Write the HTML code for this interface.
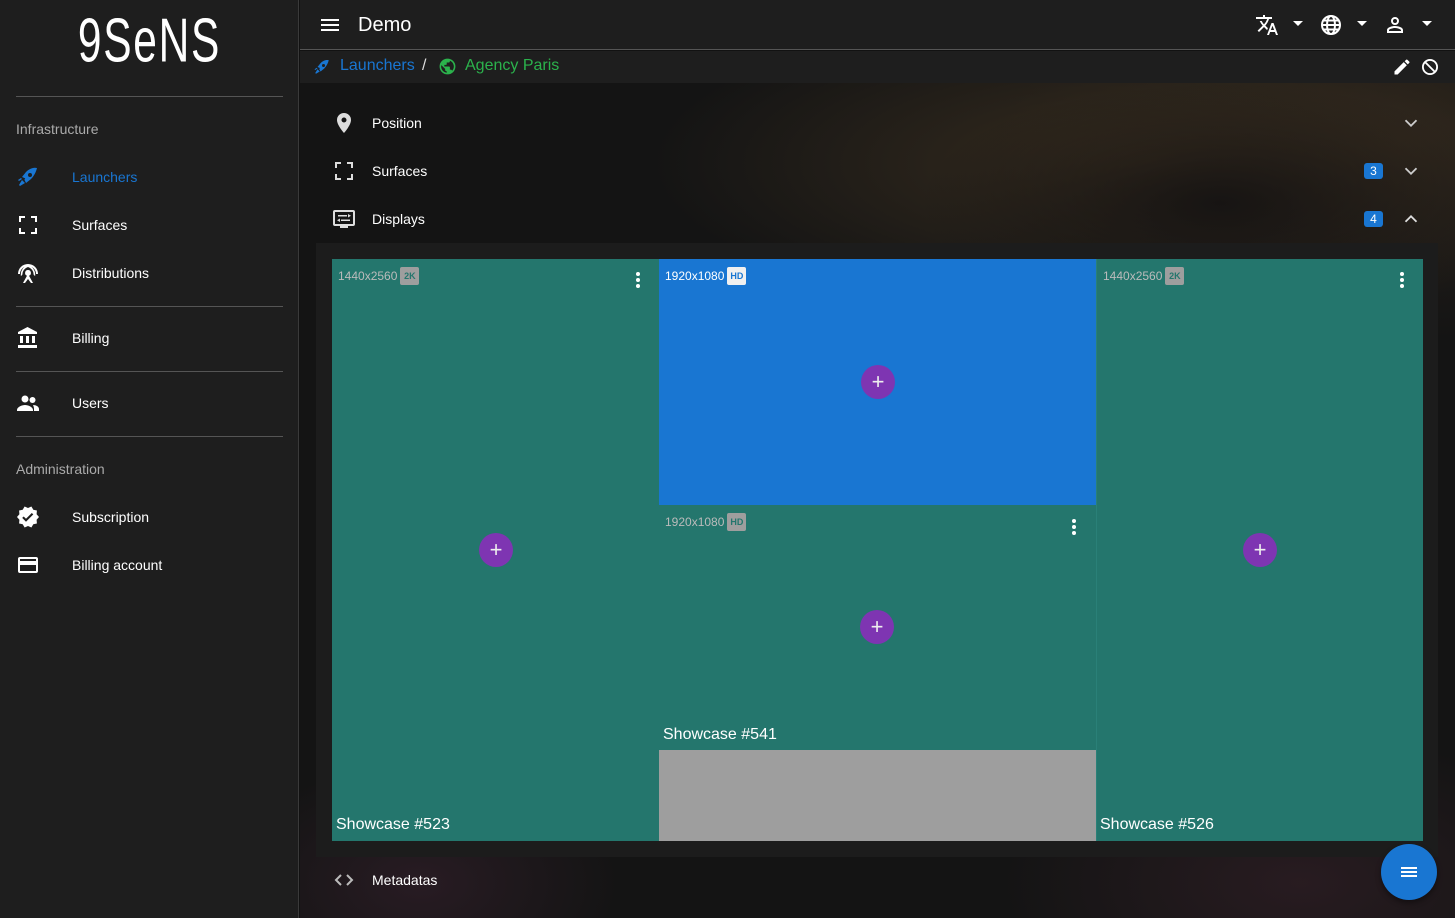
<!DOCTYPE html>
<html><head><meta charset="utf-8"><style>
*{box-sizing:border-box;margin:0;padding:0}
body{width:1455px;height:918px;overflow:hidden;background:#121212;font-family:"Liberation Sans",sans-serif;color:#fff;position:relative}
.side{position:absolute;left:0;top:0;width:299px;height:918px;background:#1e1e1e;border-right:1px solid #3a3a3a}
.logo{position:absolute;left:0;width:299px;top:4px;text-align:center;font-family:"Liberation Sans Narrow","Liberation Sans",sans-serif;font-size:50px;letter-spacing:2px;transform:scale(0.85,1.25);transform-origin:center top;color:#fff;font-weight:300}
.hr{position:absolute;left:16px;width:267px;height:1px;background:#555}
.sh{position:absolute;left:16px;font-size:14px;color:#aaa}
.it{position:absolute;left:16px;height:24px;display:flex;align-items:center;font-size:14px}
.it svg{width:24px;height:24px;margin-right:32px;fill:#fff}
.top{position:absolute;left:300px;top:0;right:0;height:50px;background:#1e1e1e;border-bottom:1px solid #555}
.bc{position:absolute;left:300px;top:51px;right:0;height:32px;background:#1e1e1e}
.main{position:absolute;left:300px;top:83px;right:0;bottom:0;background:
radial-gradient(ellipse 300px 120px at 920px 120px,rgba(20,18,18,.9),transparent),
radial-gradient(ellipse 500px 160px at 850px 80px,rgba(70,55,35,.7),transparent),
radial-gradient(ellipse 400px 200px at 1100px 60px,rgba(50,40,30,.6),transparent),
radial-gradient(ellipse 200px 120px at 120px 800px,rgba(60,35,50,.5),transparent),
radial-gradient(ellipse 300px 150px at 1000px 800px,rgba(60,35,45,.5),transparent),
#141414}
.row{position:absolute;left:332px;height:24px;display:flex;align-items:center;font-size:14px}
.row svg{width:24px;height:24px;fill:#ddd;margin-right:16px}
.chev{position:absolute;left:1400px;width:22px;height:22px}
.badge{position:absolute;left:1364px;width:19px;height:16px;background:#1976d2;border-radius:3px;font-size:12px;text-align:center;line-height:16px}
.panel{position:absolute;left:316px;top:243px;width:1122px;height:614px;background:#1c1c1c}
.d{position:absolute}
.res{position:absolute;left:6px;top:8px;font-size:12px;color:#bbb;display:flex;align-items:center}
.res b{display:inline-block;margin-left:3px;width:19px;height:18px;border-radius:2px;background:#9e9e9e;color:#24766d;font-size:9px;line-height:18px;text-align:center;font-weight:bold}
.plus{position:absolute;width:34px;height:34px;border-radius:50%;background:#7e35b2;color:#eee;font-size:22px;line-height:33px;text-align:center;font-weight:300}
.name{position:absolute;left:4px;bottom:7px;font-size:16px}
.dots{position:absolute;width:4px;top:13px}
.dots i{display:block;width:4px;height:4px;border-radius:50%;background:#fff;margin-bottom:2px}
</style></head><body>
<div class="side">
<div class="logo">9SeNS</div>
<div class="hr" style="top:96px"></div>
<div class="sh" style="top:121px">Infrastructure</div>
<div class="it" style="top:165px;color:#1976d2"><svg viewBox="0 0 24 24" style="fill:#1976d2"><path d="M9.2 13.4 6 12l4-5c3-3 7-5 11-4-1 4-3 8-6 11l-5 4-1.6-3.2zM14 8a2 2 0 1 0 2 2 2 2 0 0 0-2-2zM3 20l3-5 3 3-5 3zM2 15l3-2 1 1-3 2z"/></svg>Launchers</div>
<div class="it" style="top:213px"><svg viewBox="0 0 24 24"><path d="M3 3h6v2H5v4H3zM15 3h6v6h-2V5h-4zM3 15h2v4h4v2H3zM19 15h2v6h-6v-2h4z"/></svg>Surfaces</div>
<div class="it" style="top:261px"><svg viewBox="0 0 24 24"><path d="M12 9a3 3 0 0 0-1 5.8L7 22h2l3-4 3 4h2l-4-7.2A3 3 0 0 0 12 9zM6.3 13.7l-1.4 1.4A10 10 0 0 1 12 4a10 10 0 0 1 7.1 11.1l-1.4-1.4A8 8 0 0 0 12 6a8 8 0 0 0-5.7 7.7zM2 13a10 10 0 0 1 20 0h-2a8 8 0 0 0-16 0z"/></svg>Distributions</div>
<div class="hr" style="top:306px"></div>
<div class="it" style="top:326px"><svg viewBox="0 0 24 24"><path d="M4 10v7h3v-7zm6 0v7h3v-7zM2 22h19v-3H2zm14-12v7h3v-7zM11.5 1 2 6v2h19V6z"/></svg>Billing</div>
<div class="hr" style="top:371px"></div>
<div class="it" style="top:391px"><svg viewBox="0 0 24 24"><circle cx="9" cy="8" r="3.5"/><circle cx="16.5" cy="9" r="3"/><path d="M1 19c0-3 5-5 8-5s8 2 8 5v1H1zM17 14c3 0 6 1.5 6 4v2h-5v-2c0-1.5-.5-3-1-4z"/></svg>Users</div>
<div class="hr" style="top:436px"></div>
<div class="sh" style="top:461px">Administration</div>
<div class="it" style="top:505px"><svg viewBox="0 0 24 24"><path d="M23 12l-2.4-2.8.3-3.7-3.6-.8-1.9-3.2L12 3 8.6 1.5 6.7 4.7 3.1 5.5l.3 3.7L1 12l2.4 2.8-.3 3.7 3.6.8 1.9 3.2L12 21l3.4 1.5 1.9-3.2 3.6-.8-.3-3.7zm-13 4.7-3.8-3.8 1.5-1.4 2.3 2.3 5.8-5.8 1.5 1.4z"/></svg>Subscription</div>
<div class="it" style="top:553px"><svg viewBox="0 0 24 24"><path d="M20 4H4a2 2 0 0 0-2 2v12a2 2 0 0 0 2 2h16a2 2 0 0 0 2-2V6a2 2 0 0 0-2-2zm0 14H4v-6h16zm0-10H4V6h16z"/></svg>Billing account</div>
</div>
<div class="top">
<svg style="position:absolute;left:18px;top:13px" width="24" height="24" viewBox="0 0 24 24" fill="#fff"><path d="M3 6h18v2H3zm0 5h18v2H3zm0 5h18v2H3z"/></svg>
<div style="position:absolute;left:58px;top:14px;font-size:20px">Demo</div>
<svg style="position:absolute;left:955px;top:13px" width="24" height="24" viewBox="0 0 24 24" fill="#fff"><path d="M12.9 15.1 10.3 12.6v0A17 17 0 0 0 14 6h3V4h-7V2H8v2H1v2h11.2A15.6 15.6 0 0 1 9 11.4 15.6 15.6 0 0 1 6.7 8H4.7a17.6 17.6 0 0 0 3 4.6l-5.1 5 1.4 1.4L9 14l3.1 3.1zM18.5 10h-2L12 22h2l1.1-3h4.8l1.1 3h2zm-2.6 7 1.6-4.3 1.6 4.3z"/></svg>
<svg style="position:absolute;left:992px;top:20px" width="12" height="8"><path d="M1 1h10L6 6z" fill="#fff"/></svg>
<svg style="position:absolute;left:1019px;top:13px" width="24" height="24" viewBox="0 0 24 24" fill="none" stroke="#fff" stroke-width="2"><circle cx="12" cy="12" r="9"/><ellipse cx="12" cy="12" rx="4" ry="9"/><path d="M3 12h18M4.5 7.5h15M4.5 16.5h15"/></svg>
<svg style="position:absolute;left:1056px;top:20px" width="12" height="8"><path d="M1 1h10L6 6z" fill="#fff"/></svg>
<svg style="position:absolute;left:1083px;top:13px" width="24" height="24" viewBox="0 0 24 24" fill="#fff"><path d="M12 4a4 4 0 1 0 4 4 4 4 0 0 0-4-4zm0 6a2 2 0 1 1 2-2 2 2 0 0 1-2 2zm0 3c-2.7 0-8 1.3-8 4v3h16v-3c0-2.7-5.3-4-8-4zm6 5H6v-1c.2-.7 3.3-2 6-2s5.8 1.3 6 2z"/></svg>
<svg style="position:absolute;left:1121px;top:20px" width="12" height="8"><path d="M1 1h10L6 6z" fill="#fff"/></svg>
</div>
<div class="bc">
<svg style="position:absolute;left:13px;top:7px" width="18" height="18" viewBox="0 0 24 24" fill="#1976d2"><path d="M9.2 13.4 6 12l4-5c3-3 7-5 11-4-1 4-3 8-6 11l-5 4-1.6-3.2zM14 8a2 2 0 1 0 2 2 2 2 0 0 0-2-2zM3 20l3-5 3 3-5 3zM2 15l3-2 1 1-3 2z"/></svg>
<div style="position:absolute;left:40px;top:6px;font-size:16px;color:#1976d2">Launchers</div>
<div style="position:absolute;left:122px;top:6px;font-size:16px;color:#ddd">/</div>
<svg style="position:absolute;left:138px;top:6px" width="19" height="19" viewBox="0 0 24 24" fill="#2bb24c"><path d="M12 2a10 10 0 1 0 10 10A10 10 0 0 0 12 2zm-1 17.9A8 8 0 0 1 4.2 10.2L9 15v1a2 2 0 0 0 2 2zm6.9-2.5A2 2 0 0 0 16 16h-1v-3a1 1 0 0 0-1-1H8v-2h2a1 1 0 0 0 1-1V7h2a2 2 0 0 0 2-2v-.4a8 8 0 0 1 2.9 12.8z"/></svg>
<div style="position:absolute;left:165px;top:6px;font-size:16px;color:#2bb24c">Agency Paris</div>
<svg style="position:absolute;left:1092px;top:6px" width="20" height="20" viewBox="0 0 24 24" fill="#fff"><path d="M3 17.2V21h3.8L17.8 9.9l-3.7-3.7zM20.7 7a1 1 0 0 0 0-1.4l-2.3-2.3a1 1 0 0 0-1.4 0l-1.8 1.8 3.7 3.7z"/></svg>
<svg style="position:absolute;left:1120px;top:6px" width="20" height="20" viewBox="0 0 24 24" fill="none" stroke="#fff" stroke-width="2.2"><circle cx="12" cy="12" r="8.5"/><path d="M6 6l12 12"/></svg>
</div>
<div class="main"></div>
<div class="row" style="top:111px"><svg viewBox="0 0 24 24"><path d="M12 2a7 7 0 0 0-7 7c0 5.2 7 13 7 13s7-7.8 7-13a7 7 0 0 0-7-7zm0 9.5A2.5 2.5 0 1 1 14.5 9 2.5 2.5 0 0 1 12 11.5z"/></svg>Position</div>
<div class="row" style="top:159px"><svg viewBox="0 0 24 24"><path d="M3 3h6v2H5v4H3zM15 3h6v6h-2V5h-4zM3 15h2v4h4v2H3zM19 15h2v6h-6v-2h4z"/></svg>Surfaces</div>
<div class="row" style="top:207px"><svg viewBox="0 0 24 24"><path d="M21 3H3a2 2 0 0 0-2 2v12a2 2 0 0 0 2 2h5v2h8v-2h5a2 2 0 0 0 2-2V5a2 2 0 0 0-2-2zm0 14H3V5h18zM6 8h9v1.5H6zm3 4.5h9V14H9zM16 7l3 1.7-3 1.8zM8 11.5v3.5L5 13.2z"/></svg>Displays</div>
<svg class="chev" style="top:112px" viewBox="0 0 24 24" fill="none" stroke="#ccc" stroke-width="2"><path d="M6 9l6 6 6-6"/></svg>
<svg class="chev" style="top:160px" viewBox="0 0 24 24" fill="none" stroke="#ccc" stroke-width="2"><path d="M6 9l6 6 6-6"/></svg>
<svg class="chev" style="top:208px" viewBox="0 0 24 24" fill="none" stroke="#ddd" stroke-width="2"><path d="M6 15l6-6 6 6"/></svg>
<div class="badge" style="top:163px">3</div>
<div class="badge" style="top:211px">4</div>
<div class="panel"></div>
<div class="d" style="left:332px;top:259px;width:327px;height:582px;background:#24766d">
<div class="res">1440x2560<b>2K</b></div><div class="dots" style="left:304px"><i></i><i></i><i></i></div>
<div class="plus" style="left:147px;top:274px">+</div><div class="name">Showcase #523</div></div>
<div class="d" style="left:659px;top:259px;width:437px;height:246px;background:#1976d2">
<div class="res" style="color:#fff">1920x1080<b style="background:#f0f0f0;color:#1976d2">HD</b></div>
<div class="plus" style="left:202px;top:106px">+</div></div>
<div class="d" style="left:659px;top:505px;width:437px;height:245px;background:#24766d">
<div class="res">1920x1080<b>HD</b></div><div class="dots" style="left:413px;top:14px"><i></i><i></i><i></i></div>
<div class="plus" style="left:201px;top:105px">+</div><div class="name" style="bottom:6px">Showcase #541</div></div>
<div class="d" style="left:659px;top:750px;width:437px;height:91px;background:#9e9e9e"></div>
<div class="d" style="left:1096px;top:259px;width:327px;height:582px;background:#24766d;border-left:1px solid #2a8078">
<div class="res">1440x2560<b>2K</b></div><div class="dots" style="left:303px"><i></i><i></i><i></i></div>
<div class="plus" style="left:146px;top:274px">+</div><div class="name" style="left:3px">Showcase #526</div></div>
<div class="row" style="top:868px"><svg viewBox="0 0 24 24" fill="none" stroke="#bbb" stroke-width="2" style="fill:none"><path d="M9 7l-5 5 5 5M15 7l5 5-5 5"/></svg>Metadatas</div>
<div style="position:absolute;left:1381px;top:844px;width:56px;height:56px;border-radius:50%;background:#1976d2;box-shadow:0 3px 6px rgba(0,0,0,.4)">
<svg style="position:absolute;left:16px;top:16px" width="24" height="24" viewBox="0 0 24 24" fill="#fff"><path d="M4 7h16v2H4zm0 4h16v2H4zm0 4h16v2H4z"/></svg></div>
</body></html>
